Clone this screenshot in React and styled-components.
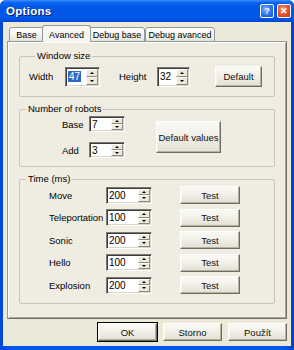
import { createGlobalStyle } from "styled-components"
import styled from "styled-components"

const Global = createGlobalStyle`
  html, body {
    margin: 0;
    padding: 0;
    background: #ffffff;
  }
  * {
    box-sizing: border-box;
  }
  body {
    font-family: "Liberation Sans", Arial, sans-serif;
    font-size: 9px;
    color: #000;
  }
`

const Window = styled.div`
  width: 294px;
  height: 350px;
  display: flex;
  flex-direction: column;
  background: linear-gradient(90deg, #0046d5 0%, #0058e8 3%, #0058e8 97%, #0042c6 100%);
  border-radius: 6px 6px 0 0;
  overflow: hidden;
`

const TitleBar = styled.div`
  height: 22px;
  flex: none;
  display: flex;
  align-items: center;
  justify-content: space-between;
  padding: 0 3px 0 6px;
  background: linear-gradient(
    180deg,
    #3d8fff 0%,
    #0a63f0 12%,
    #0055e5 40%,
    #0058ea 80%,
    #0047d0 100%
  );
`

const Title = styled.div`
  color: #fff;
  font-weight: bold;
  font-size: 11.5px;
  text-shadow: 1px 1px 0 #0a1e6e;
  letter-spacing: 0.3px;
`

const Caption = styled.div`
  display: flex;
  gap: 3px;
`

const CaptionButton = styled.div`
  width: 14px;
  height: 14px;
  border: 1px solid #fff;
  border-radius: 2px;
  display: flex;
  align-items: center;
  justify-content: center;
  color: #fff;
  font-weight: bold;
  font-size: 9px;
  background: ${(p) =>
    p.$close
      ? "radial-gradient(circle at 40% 35%, #f39a7f 0%, #e0512e 55%, #c23a14 100%)"
      : "radial-gradient(circle at 40% 35%, #7fb1ff 0%, #2e6ef0 55%, #1a4fd6 100%)"};
`

const Body = styled.div`
  flex: 1;
  margin: 0 3px 4px 3px;
  background: #ece9d8;
  padding: 3px 4px 5px 4px;
  display: flex;
  flex-direction: column;
`

const TabStrip = styled.div`
  height: 17px;
  display: flex;
  align-items: flex-end;
  padding-left: 2px;
  position: relative;
  z-index: 1;
  margin-bottom: -1px;
`

const Tab = styled.div`
  width: ${(p) => p.$w}px;
  height: ${(p) => (p.$active ? "17px" : "15px")};
  padding-top: 1px;
  margin: ${(p) => (p.$active ? "0 -2px" : "0")};
  display: flex;
  align-items: center;
  justify-content: center;
  font-size: 9px;
  white-space: nowrap;
  border: 1px solid #919b9c;
  border-bottom: ${(p) => (p.$active ? "none" : "1px solid #919b9c")};
  border-radius: 3px 3px 0 0;
  background: ${(p) =>
    p.$active ? "#f7f6f0" : "linear-gradient(#ffffff, #f1f0ea 70%, #e4e2d6)"};
  position: relative;
  z-index: ${(p) => (p.$active ? 2 : 1)};
`

const Panel = styled.div`
  flex: 1;
  border: 1px solid #919b9c;
  border-right-color: #6f6d62;
  border-bottom-color: #6f6d62;
  box-shadow: inset 1px 1px 0 #fff, inset -1px -1px 0 #aca899;
  background: #efede2;
  padding: 8px 11px 0 11px;
  display: flex;
  flex-direction: column;
  gap: 6px;
`

const Group = styled.fieldset`
  margin: 0;
  min-width: 0;
  border: 1px solid #c8c6b8;
  border-radius: 2px;
  padding: ${(p) => p.$pad};
`

const Legend = styled.legend`
  margin-left: 6px;
  padding: 0 2px;
  font-size: 9.5px;
  line-height: 12px;
`

const Row = styled.div`
  display: flex;
  align-items: center;
  height: ${(p) => p.$h || 18}px;
`

const Label = styled.span`
  width: ${(p) => p.$w}px;
  margin-left: ${(p) => p.$ml || 0}px;
  flex: none;
  font-size: 9.5px;
  white-space: nowrap;
`

const Spin = styled.div`
  width: ${(p) => p.$w}px;
  height: ${(p) => p.$h}px;
  flex: none;
  display: flex;
  background: #fff;
  border: 1px solid;
  border-color: #7a7a72 #fff #fff #7a7a72;
  box-shadow: inset 1px 1px 0 #3c3c3c, inset -1px -1px 0 #d8d5c8;
  padding: 1px;
`

const Value = styled.div`
  flex: 1;
  display: flex;
  align-items: center;
  padding-left: 1px;
  font-size: 10px;
`

const Selected = styled.span`
  background: #316ac5;
  color: #fff;
  padding: 0 1px;
`

const Arrows = styled.div`
  width: 12px;
  display: flex;
  flex-direction: column;
`

const Arrow = styled.div`
  flex: 1;
  background: #ece9d8;
  border: 1px solid;
  border-color: #fff #8c8a80 #8c8a80 #fff;
  display: flex;
  align-items: center;
  justify-content: center;
  &::after {
    content: "";
    border-left: 2px solid transparent;
    border-right: 2px solid transparent;
    ${(p) =>
      p.$down ? "border-top: 2px solid #000;" : "border-bottom: 2px solid #000;"}
  }
`

const Button = styled.div`
  width: ${(p) => p.$w}px;
  height: ${(p) => p.$h}px;
  margin-left: ${(p) => p.$ml || 0}px;
  flex: none;
  display: flex;
  align-items: center;
  justify-content: center;
  font-size: 9.5px;
  color: #111;
  border: 1px solid;
  border-color: #fff #6f6d62 #6f6d62 #fff;
  box-shadow: inset -1px -1px 0 #b5b2a4, inset 1px 1px 0 #f6f5f0;
  background: linear-gradient(#fbfbf8, #eeece3 60%, #e2dfd2);
  outline: ${(p) => (p.$default ? "1px solid #000" : "none")};
`

const RobotBody = styled.div`
  display: flex;
  align-items: center;
`

const RobotCol = styled.div`
  display: flex;
  flex-direction: column;
  gap: 10px;
  padding-left: 42px;
`

const TimeRows = styled.div`
  display: flex;
  flex-direction: column;
  gap: 4.5px;
  padding-left: 29px;
`

const Footer = styled.div`
  display: flex;
  justify-content: flex-end;
  gap: 6px;
  margin-top: 4px;
`

const SpinBox = ({ value, w, h, selected }) => (
  <Spin $w={w} $h={h}>
    <Value>{selected ? <Selected>{value}</Selected> : value}</Value>
    <Arrows>
      <Arrow />
      <Arrow $down />
    </Arrows>
  </Spin>
)

const times = [
  ["Move", "200"],
  ["Teleportation", "100"],
  ["Sonic", "200"],
  ["Hello", "100"],
  ["Explosion", "200"],
]

const App = () => {
  return (
    <>
      <Global />
      <Window>
        <TitleBar>
          <Title>Options</Title>
          <Caption>
            <CaptionButton>?</CaptionButton>
            <CaptionButton $close>✕</CaptionButton>
          </Caption>
        </TitleBar>
        <Body>
          <TabStrip>
            <Tab $w={35}>Base</Tab>
            <Tab $w={49} $active>Avanced</Tab>
            <Tab $w={56}>Debug base</Tab>
            <Tab $w={70}>Debug avanced</Tab>
          </TabStrip>
          <Panel>
            <Group $pad="4px 0 9px 9px">
              <Legend>Window size</Legend>
              <Row $h={21}>
                <Label $w={36}>Width</Label>
                <SpinBox value="47" w={35} h={20} selected />
                <Label $w={38} $ml={19}>Height</Label>
                <SpinBox value="32" w={33} h={20} />
                <Button $w={47} $h={21} $ml={25}>Default</Button>
              </Row>
            </Group>
            <Group $pad="1px 0 8px 0">
              <Legend>Number of robots</Legend>
              <RobotBody>
                <RobotCol>
                  <Row $h={16}>
                    <Label $w={27}>Base</Label>
                    <SpinBox value="7" w={36} h={16} />
                  </Row>
                  <Row $h={16}>
                    <Label $w={27}>Add</Label>
                    <SpinBox value="3" w={36} h={16} />
                  </Row>
                </RobotCol>
                <Button $w={65} $h={32} $ml={31}>Default values</Button>
              </RobotBody>
            </Group>
            <Group $pad="1px 0 9px 0">
              <Legend>Time (ms)</Legend>
              <TimeRows>
                {times.map(([name, value]) => (
                  <Row key={name}>
                    <Label $w={57}>{name}</Label>
                    <SpinBox value={value} w={46} h={17} />
                    <Button $w={60} $h={18} $ml={28}>Test</Button>
                  </Row>
                ))}
              </TimeRows>
            </Group>
          </Panel>
          <Footer>
            <Button $w={59} $h={18} $default>OK</Button>
            <Button $w={59} $h={18}>Storno</Button>
            <Button $w={59} $h={18}>Použít</Button>
          </Footer>
        </Body>
      </Window>
    </>
  )
}

export default App
